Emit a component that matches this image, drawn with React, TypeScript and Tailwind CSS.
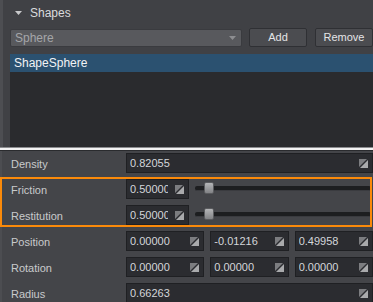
import React from "react";

const font = { fontFamily: '"Liberation Sans", Arial, sans-serif' };

function DragIcon() {
  return (
    <svg width="9" height="9" viewBox="0 0 9 9" className="shrink-0">
      <polygon points="0,0 8,0 0,8" fill="#7c7d80" />
      <polygon points="9,1 9,9 1,9" fill="#a9aaac" />
      <line x1="0" y1="9" x2="9" y2="0" stroke="#2b2c30" strokeWidth="1" />
    </svg>
  );
}

function NumField({ value, className = "" }: { value: string; className?: string }) {
  return (
    <div
      className={`flex h-[20px] items-center border border-[#1f2023] bg-[#2b2c30] pl-[3px] pr-[4px] ${className}`}
    >
      <div className="mr-[7px] min-w-0 flex-1 overflow-hidden whitespace-nowrap text-[11px] leading-none text-[#d4d6da]">
        {value}
      </div>
      <DragIcon />
    </div>
  );
}

function Slider() {
  return (
    <div className="relative ml-[6px] mr-[2px] h-[20px] flex-1">
      <div className="absolute left-0 right-0 top-[7px] h-[5px] rounded-[2px] border-b border-[#3a3b3f] bg-[#1d1e20]" />
      <div className="absolute left-[9px] top-[3px] h-[12px] w-[10px] rounded-[2px] border border-[#5a5b5e] bg-gradient-to-b from-[#b4b5b7] to-[#828386]" />
    </div>
  );
}

function Row({ label, children }: { label: string; children: React.ReactNode }) {
  return (
    <div className="flex h-[26px] items-start">
      <div className="flex h-[26px] w-[124px] shrink-0 items-center pl-[9px] text-[11px] text-[#c9cacc]">
        {label}
      </div>
      <div className="mt-[2px] flex min-w-0 flex-1 items-start">{children}</div>
    </div>
  );
}

export default function App() {
  return (
    <div className="h-[302px] w-[373px] overflow-hidden bg-[#404145]" style={font}>
      <div className="flex h-[147px] flex-col border-l-[3px] border-[#4d4e52] bg-[#404145]">
        <div className="flex h-[26px] items-center pl-[12px]">
          <svg width="7" height="4" viewBox="0 0 7 4" className="mt-[-1px]">
            <polygon points="0,0 7,0 3.5,4" fill="#c8c9cb" />
          </svg>
          <span className="ml-[8px] text-[12px] text-[#dadbdd]">Shapes</span>
        </div>
        <div className="mt-[2px] flex h-[19px] items-center pl-[7px]">
          <div className="flex h-[18px] w-[232px] items-center rounded-[2px] border border-[#3a3b3f] bg-[#58595d] pl-[4px] pr-[5px]">
            <span className="flex-1 text-[12px] text-[#a5a6a9]">Sphere</span>
            <svg width="7" height="4" viewBox="0 0 7 4">
              <polygon points="0,0 7,0 3.5,4" fill="#8d8e91" />
            </svg>
          </div>
          <div className="ml-[7px] flex h-[19px] w-[58px] items-center justify-center rounded-[2px] border border-[#2f3034] bg-[#4b4c50] text-[11px] text-[#e4e5e7]">
            Add
          </div>
          <div className="ml-[8px] flex h-[19px] flex-1 items-center justify-center rounded-[2px] border border-[#2f3034] bg-[#4b4c50] text-[11px] text-[#e4e5e7]">
            Remove
          </div>
        </div>
        <div className="ml-[7px] mt-[7px] flex-1 bg-[#2a2b2e]">
          <div className="flex h-[18px] items-center bg-[#2b5170] pl-[4px] text-[12px] text-[#f2f3f5]">
            ShapeSphere
          </div>
        </div>
      </div>
      <div className="h-[1px] bg-[#8c8d90]" />
      <div className="h-[2px] bg-[#f3f3f3]" />
      <div className="h-[1px] bg-[#2a2b2e]" />

      <div className="border-l-[2px] border-[#4c4d51] bg-[#444549]">
        <Row label="Density">
          <NumField value="0.82055" className="flex-1" />
        </Row>
        <div className="relative -ml-[2px] pl-[2px]">
          <Row label="Friction">
            <NumField value="0.50000" className="w-[63px] shrink-0" />
            <Slider />
          </Row>
          <Row label="Restitution">
            <NumField value="0.50000" className="w-[63px] shrink-0" />
            <Slider />
          </Row>
          <div className="pointer-events-none absolute left-0 top-0 h-[50px] w-[372px] border-2 border-[#fb8a0a]" />
        </div>
        <Row label="Position">
          <div className="flex flex-1 gap-[6px]">
            <NumField value="0.00000" className="flex-1" />
            <NumField value="-0.01216" className="flex-1" />
            <NumField value="0.49958" className="flex-1" />
          </div>
        </Row>
        <Row label="Rotation">
          <div className="flex flex-1 gap-[6px]">
            <NumField value="0.00000" className="flex-1" />
            <NumField value="0.00000" className="flex-1" />
            <NumField value="0.00000" className="flex-1" />
          </div>
        </Row>
        <Row label="Radius">
          <NumField value="0.66263" className="flex-1" />
        </Row>
      </div>
    </div>
  );
}
